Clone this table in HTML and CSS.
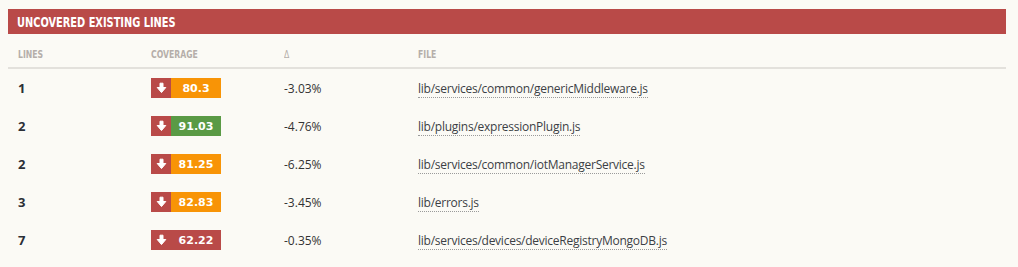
FILE: index.html
```html
<!DOCTYPE html>
<html lang="en">
<head>
    <meta charset="UTF-8">
    <title>Uncovered Existing Lines</title>
    <link rel="stylesheet" href="styles.css">
</head>
<body>
    <div class="panel">
        <h2 class="panel-title"><span>Uncovered Existing Lines</span></h2>
        <table class="coverage-table">
            <thead>
                <tr>
                    <th class="col-lines"><span>Lines</span></th>
                    <th class="col-coverage"><span>Coverage</span></th>
                    <th class="col-delta delta"><span>&Delta;</span></th>
                    <th><span>File</span></th>
                </tr>
            </thead>
            <tbody>
                <tr>
                    <td class="lines">1</td>
                    <td><span class="badge"><span class="badge-icon"><svg width="11" height="12" viewBox="0 0 11 12"><path d="M4 1.2h3v4.3h2.8L5.5 10.6 1.2 5.5H4z" fill="#fff" stroke="#fff" stroke-width="1" stroke-linejoin="round"/></svg></span><span class="badge-value warn">80.3</span></span></td>
                    <td>-3.03%</td>
                    <td><a href="#">lib/services/common/genericMiddleware.js</a></td>
                </tr>
                <tr>
                    <td class="lines">2</td>
                    <td><span class="badge"><span class="badge-icon"><svg width="11" height="12" viewBox="0 0 11 12"><path d="M4 1.2h3v4.3h2.8L5.5 10.6 1.2 5.5H4z" fill="#fff" stroke="#fff" stroke-width="1" stroke-linejoin="round"/></svg></span><span class="badge-value good">91.03</span></span></td>
                    <td>-4.76%</td>
                    <td><a href="#">lib/plugins/expressionPlugin.js</a></td>
                </tr>
                <tr>
                    <td class="lines">2</td>
                    <td><span class="badge"><span class="badge-icon"><svg width="11" height="12" viewBox="0 0 11 12"><path d="M4 1.2h3v4.3h2.8L5.5 10.6 1.2 5.5H4z" fill="#fff" stroke="#fff" stroke-width="1" stroke-linejoin="round"/></svg></span><span class="badge-value warn">81.25</span></span></td>
                    <td>-6.25%</td>
                    <td><a href="#">lib/services/common/iotManagerService.js</a></td>
                </tr>
                <tr>
                    <td class="lines">3</td>
                    <td><span class="badge"><span class="badge-icon"><svg width="11" height="12" viewBox="0 0 11 12"><path d="M4 1.2h3v4.3h2.8L5.5 10.6 1.2 5.5H4z" fill="#fff" stroke="#fff" stroke-width="1" stroke-linejoin="round"/></svg></span><span class="badge-value warn">82.83</span></span></td>
                    <td>-3.45%</td>
                    <td><a href="#">lib/errors.js</a></td>
                </tr>
                <tr>
                    <td class="lines">7</td>
                    <td><span class="badge"><span class="badge-icon"><svg width="11" height="12" viewBox="0 0 11 12"><path d="M4 1.2h3v4.3h2.8L5.5 10.6 1.2 5.5H4z" fill="#fff" stroke="#fff" stroke-width="1" stroke-linejoin="round"/></svg></span><span class="badge-value bad">62.22</span></span></td>
                    <td>-0.35%</td>
                    <td><a href="#">lib/services/devices/deviceRegistryMongoDB.js</a></td>
                </tr>
            </tbody>
        </table>
    </div>
</body>
</html>
```

FILE: styles.css
```css
body {
    margin: 0;
    padding: 9px 12px 0 8px;
    background-color: #fbfaf5;
    font-family: "Open Sans", sans-serif;
    font-size: 12px;
    color: #333;
}
.panel-title {
    margin: 0;
    height: 25px;
    line-height: 26px;
    padding-left: 9px;
    background-color: #b94a48;
    color: #fff;
    font-family: "DejaVu Sans Condensed", sans-serif;
    font-weight: bold;
    font-size: 14px;
    text-transform: uppercase;
}
.panel-title span {
    display: inline-block;
    transform: scaleX(0.78);
    transform-origin: left center;
}
.coverage-table {
    width: 100%;
    border-collapse: collapse;
    table-layout: fixed;
}
.coverage-table th {
    height: 34px;
    padding: 0 10px 6px;
    box-sizing: border-box;
    vertical-align: bottom;
    text-align: left;
    font-family: "DejaVu Sans Condensed", sans-serif;
    font-weight: bold;
    font-size: 11px;
    color: #b5aea9;
    text-transform: uppercase;
    border-bottom: 2px solid #e3e1dc;
}
.coverage-table th span {
    display: inline-block;
    transform: scaleX(0.78);
    transform-origin: left center;
}
.coverage-table th.delta {
    font-weight: normal;
}
.col-lines,
.col-coverage {
    width: 133px;
}
.col-delta {
    width: 134px;
}
.coverage-table td {
    height: 38px;
    padding: 0 10px;
    vertical-align: middle;
}
.lines {
    font-weight: bold;
    font-size: 13px;
    color: #2b2f36;
}
.badge {
    display: inline-flex;
    height: 20px;
    vertical-align: middle;
}
.badge-icon {
    width: 20px;
    display: flex;
    align-items: center;
    justify-content: center;
    background-color: #b94a48;
}
.badge-value {
    width: 50px;
    display: flex;
    align-items: center;
    justify-content: center;
    color: #fff;
    font-family: "DejaVu Sans", sans-serif;
    font-weight: bold;
    font-size: 11px;
}
.badge-value.warn {
    background-color: #f89406;
}
.badge-value.good {
    background-color: #5a9a45;
}
.badge-value.bad {
    background-color: #b94a48;
}
.coverage-table a {
    color: #3b3f45;
    text-decoration: none;
    letter-spacing: -0.25px;
    border-bottom: 1px dotted #9a9a9a;
}
```
